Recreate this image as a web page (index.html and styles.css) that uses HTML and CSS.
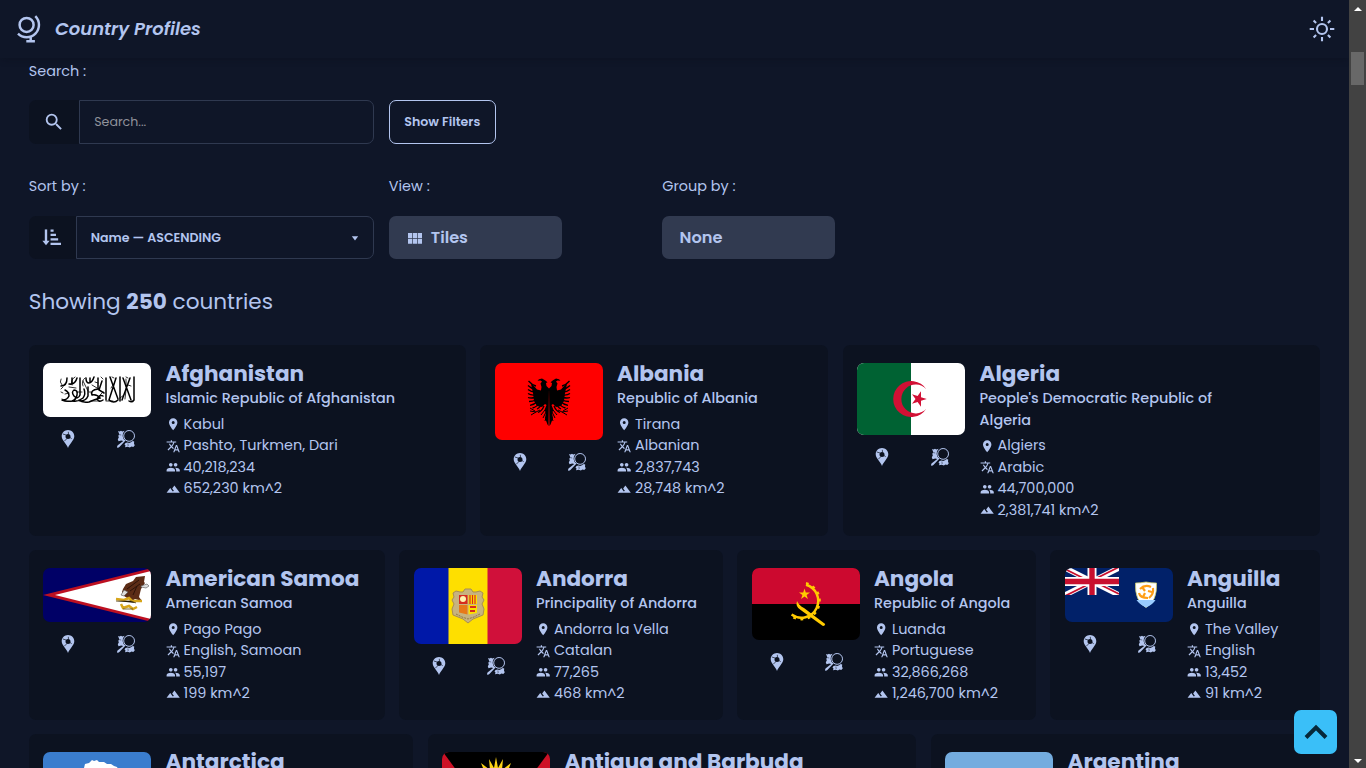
FILE: index.html
```html
<!DOCTYPE html>
<html lang="en">
<head>
<meta charset="utf-8">
<title>Country Profiles</title>
<link rel="stylesheet" href="styles.css">
</head>
<body>
<svg class="sprite" aria-hidden="true">
  <symbol id="pin" viewBox="0 0 24 24"><path fill="currentColor" d="M12 2C8.130 2 5 5.130 5 9c0 5.250 7 13 7 13s7-7.750 7-13c0-3.870-3.130-7-7-7zm0 9.500a2.500 2.500 0 1 1 0-5 2.500 2.500 0 0 1 0 5z"/></symbol>
  <symbol id="lang" viewBox="0 0 24 24"><path fill="currentColor" d="M12.870 15.070l-2.540-2.510.03-.03A17.500 17.500 0 0 0 14.070 6H17V4h-7V2H8v2H1v2h11.170C11.500 7.920 10.440 9.750 9 11.350 8.070 10.320 7.300 9.190 6.690 8h-2c.73 1.630 1.730 3.170 2.980 4.560l-5.090 5.020L4 19l5-5 3.110 3.110.76-2.040zM18.500 10h-2L12 22h2l1.120-3h4.750L21 22h2l-4.500-12zm-2.620 7l1.620-4.330L19.120 17h-3.240z"/></symbol>
  <symbol id="people" viewBox="0 0 24 24"><path fill="currentColor" d="M16 11c1.660 0 3-1.340 3-3s-1.340-3-3-3-3 1.340-3 3 1.340 3 3 3zm-8 0c1.660 0 3-1.340 3-3S9.660 5 8 5 5 6.340 5 8s1.340 3 3 3zm0 2c-2.330 0-7 1.170-7 3.500V19h14v-2.500C15 14.170 10.330 13 8 13zm8 0c-.29 0-.62.020-.97.050 1.160.84 1.970 1.970 1.970 3.450V19h6v-2.500c0-2.330-4.670-3.500-7-3.500z"/></symbol>
  <symbol id="area" viewBox="0 0 24 24"><path fill="currentColor" d="M14 6l-3.750 5 2.850 3.800-1.600 1.200C9.810 13.750 7 10 7 10l-6 8h22L14 6z"/></symbol>
  <symbol id="mappin" viewBox="0 0 18 18"><path fill="currentColor" fill-rule="evenodd" d="M9 0C5.500 0 2.700 2.800 2.700 6.300c0 2.400 1.500 4.300 3.100 6.400C7 14.300 8.300 16 9 18c.7-2 2-3.700 3.200-5.300 1.600-2.100 3.100-4 3.100-6.400C15.300 2.800 12.500 0 9 0zM9 3.900a2.500 2.500 0 1 1 0 5 2.500 2.500 0 0 1 0-5z"/><path d="M3.800 4l3.400 1M5.300 11.200l2.600-2.600M9.300 1.800l.2 2.600M11 7.500l1.700 1.200" stroke="#0c1220" stroke-width=".7" fill="none"/></symbol>
  <symbol id="mapsearch" viewBox="0 0 18 18"><circle cx="12.100" cy="5.900" r="5.400" fill="none" stroke="currentColor" stroke-width="1"/><path fill="currentColor" d="M1 1l1.500.6L4 .7l1.300.8L7.600.8 6 3.300l-.4 2.800.9 2.600 1 1.300-1.300 1-2-.4-2.700.7-.7-2 1-1.800-.5-1.700 1-1.500zM7.800 9.700l.8.9-1 1L2.400 17l-1.700 1-.7-1 .5-1.500zM8.500 13l2-.6 1.700.5 1.800-.6 1.800-1.300 1.400.5-.2 2.200.8 1.500-1.500 1.700-1.800-.3-1.700.9-2-.7-2.800.4.500-1.600-1-1z"/><path d="M2.200 4.600l2 .4M10.900 13.500l.3 2.500" stroke="#0c1220" stroke-width=".5"/></symbol>
</svg>

<div class="page">
  <header class="topbar">
    <svg class="logo" viewBox="0 0 28 30" fill="none" stroke="currentColor" stroke-width="2.500"><circle cx="10.600" cy="10.900" r="7"/><path d="M19.300 2.200A12.300 12.300 0 0 1 2 19.700M14.700 22v4.500M10.300 27.200h8.600"/></svg>
    <h1 class="brand">Country Profiles</h1>
    <svg class="sun" viewBox="0 0 26 26" fill="none" stroke="currentColor" stroke-width="2.100"><circle cx="13" cy="13" r="5"/><path d="M13 .7V5M13 21v4.300M.7 13H5M21 13h4.300M4.600 4.600l2.500 2.500M18.900 18.900l2.500 2.500M4.600 21.400l2.500-2.500M18.900 7.100l2.500-2.500"/></svg>
  </header>

  <main class="content">
    <section class="controls">
      <label class="label">Search :</label>
      <div class="search-row">
        <div class="field">
          <span class="field-icon search-icon"><svg viewBox="0 0 24 24"><path fill="currentColor" d="M15.500 14h-.79l-.28-.27A6.470 6.470 0 0 0 16 9.500 6.500 6.500 0 1 0 9.500 16c1.610 0 3.090-.59 4.230-1.570l.27.28v.79l5 4.990L20.490 19l-4.990-5zm-6 0C7.010 14 5 11.990 5 9.500S7.010 5 9.500 5 14 7.010 14 9.500 11.990 14 9.500 14z"/></svg></span>
          <div class="field-box placeholder">Search...</div>
        </div>
        <button class="outline">Show Filters</button>
      </div>
      <div class="options">
        <div class="option sort">
          <label class="label">Sort by :</label>
          <div class="field">
            <span class="field-icon sort-icon"><svg viewBox="0 0 20 20" fill="none" stroke="currentColor"><path stroke-width="2.500" d="M4.200 1.500v14"/><path fill="currentColor" stroke="none" d="M.4 13.300H8L4.200 18.200z"/><path stroke-width="2.300" d="M9 2.700h3.200M9 7.300h5.700M9 12h8M9 16.800h11"/></svg></span>
            <div class="field-box select">Name — ASCENDING<svg viewBox="0 0 8 5"><path fill="currentColor" d="M.8.3h6.400L4 4.500z"/></svg></div>
          </div>
        </div>
        <div class="option view">
          <label class="label">View :</label>
          <button class="solid tiles-btn"><svg viewBox="0 0 14 11"><path fill="currentColor" d="M0 0h4.200v5H0zM4.900 0h4.200v5H4.900zM9.800 0H14v5H9.800zM0 5.800h4.200v5H0zM4.900 5.800h4.200v5H4.900zM9.800 5.800H14v5H9.800z"/></svg>Tiles</button>
        </div>
        <div class="option group">
          <label class="label">Group by :</label>
          <button class="solid">None</button>
        </div>
      </div>
    </section>

    <p class="summary">Showing <b>250</b> countries</p>

    <section class="tiles first">
      <article class="card">
        <div class="side">
          <svg class="flag" viewBox="0 0 108 54"><path fill="#fff" d="M0 0h108v54H0z"/><g fill="none" stroke="#000" stroke-width="1.500" stroke-linecap="round"><path d="M91 14v23q-2 3-5 1M87 15l-8 22M80 15l8 22M77 14v24M73 15l-7 22q5 4 9 0M67 14l8 22M63 15v22M59 18l-3 9 5 3M60 37q-4 3-6-1 3-5 6-3M55 15v11q-8 1-6 6 5-1 8 3-7 2-11 4-7 1-10-2M51 14q-2 6-5 6-3 0-3-5M47 15v4M45 24v9q-2 5-8 5M41 26q2 5-1 9-5 4-10 3M37 15v17q-2 5-6 1-3-4 0-6 4 0 3 5-1 5-5 6-6 1-10-1M34 15q-2 7-8 6M29 15v6M22 27q4 2 4 6-2 4-6 4M24 15q0 8-6 8"/><path stroke-width=".8" d="M18 16q-2 3 1 6M20 24l-2 2M18 29l2 1M32 14q-5 3-3 8M42 15q-4 3-2 8M58 14l2 2M69 14l2 1M83 14l2 1M85 22l3 1M83 16q1 8-1 20M70 22l-2 3M52 19l3 1M46 29h3M57 32l3-3M81 32l-4 3M39 29h-5M26 30l-4 1M19 36q5 4 12 2M48 38h9M63 38h7M40 18l5 10M49 22l5 3M26 24l7 1"/></g></svg>
          <div class="actions"><svg><use href="#mappin"/></svg><svg><use href="#mapsearch"/></svg></div>
        </div>
        <div class="info">
          <h2>Afghanistan</h2><h3>Islamic Republic of Afghanistan</h3>
          <ul><li><svg><use href="#pin"/></svg>Kabul</li><li><svg><use href="#lang"/></svg>Pashto, Turkmen, Dari</li><li><svg><use href="#people"/></svg>40,218,234</li><li><svg><use href="#area"/></svg>652,230 km^2</li></ul>
        </div>
      </article>
      <article class="card">
        <div class="side">
          <svg class="flag" viewBox="0 0 108 77"><path fill="red" d="M0 0h108v77H0z"/><g id="eagle"><path d="M54 25.500l-2.500-2.500-.5-3 1.500-.8-2.500-2-3-1.700-3 .8-1.500 1.500 3-.2 1.500 1-1.500 2 1 3.400-.5 3.500-4-1-3.500-4-2.500-1.500 2 9 1 8 3 5 5 1 3-3 1.500 1-2 5 1.500 3-1 5 2.500 6.500 1 1.500z"/><path fill="none" stroke="#000" stroke-width="1.300" d="M41 23q-4-1-7.500-5M40 26q-4-.5-7-3.500M40 29q-4 0-7-2.500M40 32q-4 .5-7-1.500M40 34.500q-4 1-7 0M41 37q-3.500 1.500-7 1.500M42.500 38.500q-3 3-7.500 3.800M44.500 39.500q-2.500 4.500-7 5.500M47 39.500q-1.500 5-5 6.500M49 43q-2 5-6 6.500"/><path fill="none" stroke="#000" d="M45 47l-4 2-6-1M41 49l-5 3M40 48l-5-3M50 47l-4 5M51 49l-3 6M52 52l-2 6"/></g><use href="#eagle" transform="matrix(-1 0 0 1 108 0)"/></svg>
          <div class="actions"><svg><use href="#mappin"/></svg><svg><use href="#mapsearch"/></svg></div>
        </div>
        <div class="info">
          <h2>Albania</h2><h3>Republic of Albania</h3>
          <ul><li><svg><use href="#pin"/></svg>Tirana</li><li><svg><use href="#lang"/></svg>Albanian</li><li><svg><use href="#people"/></svg>2,837,743</li><li><svg><use href="#area"/></svg>28,748 km^2</li></ul>
        </div>
      </article>
      <article class="card">
        <div class="side">
          <svg class="flag" viewBox="0 0 108 72"><path fill="#fff" d="M0 0h108v72H0z"/><path fill="#006233" d="M0 0h54v72H0z"/><path fill="#d21034" d="M69.300 26.200a18 18 0 1 0 0 19.600 14.400 14.400 0 1 1 0-19.600zM69.800 36L64 37.800V43.800L60.600 38.900 55 40.800 58.500 36 55 31.200 60.600 33.100 64 28.200V34.200z"/></svg>
          <div class="actions"><svg><use href="#mappin"/></svg><svg><use href="#mapsearch"/></svg></div>
        </div>
        <div class="info">
          <h2>Algeria</h2><h3>People's Democratic Republic of<br>Algeria</h3>
          <ul><li><svg><use href="#pin"/></svg>Algiers</li><li><svg><use href="#lang"/></svg>Arabic</li><li><svg><use href="#people"/></svg>44,700,000</li><li><svg><use href="#area"/></svg>2,381,741 km^2</li></ul>
        </div>
      </article>
    </section>

    <section class="tiles second">
      <article class="card">
        <div class="side">
          <svg class="flag" viewBox="0 0 108 54"><path fill="#006" d="M0 0h108v54H0z"/><path fill="#bd1021" d="M0 27L105 1h3v52h-3z"/><path fill="#fff" d="M12 27l96-24v48z"/><path fill="#5c2c16" d="M80 21l3-5 7-3 3-4 9-1-1 6 1 1-4 6-2 8 3 4-7-2-3 2-8-5-2-4z"/><path d="M84 21l12-9M87 23l10-7M90 27l4-9" stroke="#2c1209" stroke-width="1"/><path fill="#ddd" stroke="#555" stroke-width=".6" d="M81 22l4 2-4 4-3-1zM98 18l6-2 2 2-3 2-5-1z"/><path fill="none" stroke="#d6a51b" stroke-width="2.500" d="M73 31l8 1 5-2 3 3h10M78 36l2 4 6-2 4 3 4-2"/><path d="M73 33h15l5 2M80 41h10" stroke="#5b410b" stroke-width=".8"/></svg>
          <div class="actions"><svg><use href="#mappin"/></svg><svg><use href="#mapsearch"/></svg></div>
        </div>
        <div class="info">
          <h2>American Samoa</h2><h3>American Samoa</h3>
          <ul><li><svg><use href="#pin"/></svg>Pago Pago</li><li><svg><use href="#lang"/></svg>English, Samoan</li><li><svg><use href="#people"/></svg>55,197</li><li><svg><use href="#area"/></svg>199 km^2</li></ul>
        </div>
      </article>
      <article class="card">
        <div class="side">
          <svg class="flag" viewBox="0 0 108 76"><path fill="#0018a8" d="M0 0h35v76H0z"/><path fill="#fedf00" d="M34.500 0H74v76H34.500z"/><path fill="#d0103a" d="M73.500 0H108v76H73.500z"/><path fill="#c7b37f" stroke="#a78d55" stroke-width="1" d="M39 25l3-2 4 1 3 0 2-3h6l2 3 3 0 4-1 3 2-1 4 2 3-2 4 2 5-1 6-5 2-5 2-5 4-5-4-5-2-5-2-1-6 2-5-2-4 2-3z"/><path fill="none" stroke="#8f7848" d="M42 46l6 3 6 2 6-2 6-3" stroke-dasharray="2 1"/><path fill="#d52b1e" d="M45 27h8.500v9H45z"/><circle cx="49" cy="31" r="3" fill="#fff2b0"/><path fill="#fedf00" d="M54.500 27H63v9h-8.500z"/><path stroke="#d52b1e" stroke-width="1.200" d="M56 27v9M58.500 27v9M61 27v9"/><path fill="#e77919" d="M45 37h8.500v9.500l-8.500-2z"/><path fill="#fedf00" d="M54.500 37H63v8l-8.500 1.500z"/><path fill="#d52b1e" d="M56 38h6v2h-6zM56 42h5v2h-5z"/></svg>
          <div class="actions"><svg><use href="#mappin"/></svg><svg><use href="#mapsearch"/></svg></div>
        </div>
        <div class="info">
          <h2>Andorra</h2><h3>Principality of Andorra</h3>
          <ul><li><svg><use href="#pin"/></svg>Andorra la Vella</li><li><svg><use href="#lang"/></svg>Catalan</li><li><svg><use href="#people"/></svg>77,265</li><li><svg><use href="#area"/></svg>468 km^2</li></ul>
        </div>
      </article>
      <article class="card">
        <div class="side">
          <svg class="flag" viewBox="0 0 108 72"><path d="M0 0h108v72H0z"/><path fill="#cc092f" d="M0 0h108v36H0z"/><g fill="none" stroke="#ffcb00"><path stroke-width="2.500" d="M54 16.800A16.800 16.800 0 1 1 39.600 46.600"/><path stroke-width="2.400" stroke-dasharray="2.800 4.400" d="M54 15.200A18.300 18.300 0 1 1 39 48"/></g><path fill="#ffcb00" d="M45 33q-2 6 4 9.300L70.500 57.800q2.300.5 2.700-1.800L52 40q-5-2.500-7-7zM52.500 20.500l1.300 4h4.200l-3.400 2.500 1.300 4-3.400-2.500-3.400 2.500 1.300-4-3.400-2.500h4.200z"/></svg>
          <div class="actions"><svg><use href="#mappin"/></svg><svg><use href="#mapsearch"/></svg></div>
        </div>
        <div class="info">
          <h2>Angola</h2><h3>Republic of Angola</h3>
          <ul><li><svg><use href="#pin"/></svg>Luanda</li><li><svg><use href="#lang"/></svg>Portuguese</li><li><svg><use href="#people"/></svg>32,866,268</li><li><svg><use href="#area"/></svg>1,246,700 km^2</li></ul>
        </div>
      </article>
      <article class="card">
        <div class="side">
          <svg class="flag" viewBox="0 0 108 54"><path fill="#012169" d="M0 0h108v54H0z"/><svg width="54" height="27" viewBox="0 0 54 27"><path stroke="#fff" stroke-width="5.400" d="M0 0l54 27M54 0L0 27"/><path stroke="#c8102e" stroke-width="1.800" d="M0 1l27 13.500M54 26L27 12.500M54-1L27 12.500M0 28l27-13.500"/><path stroke="#fff" stroke-width="9" d="M27 0v27M0 13.500h54"/><path stroke="#c8102e" stroke-width="5.400" d="M27 0v27M0 13.500h54"/></svg><path fill="#fff" stroke="#c8c86a" stroke-width=".8" d="M70.500 15q5 0 10.500-1 5 1 10.500 1 1 18-10.500 24.500Q69.500 33 70.500 15z"/><path fill="#9cf" d="M71.500 32h19q-3 5-9.500 7.500-6-2.500-9.500-7.500z"/><g fill="none" stroke="#ff9e16" stroke-width="2.200"><path d="M75 21q5-5 11-2M88 20q1 6-4 10M83 30q-8 0-9-5M77 19l3 4M87 24l-4-1M78 29l2-4"/></g></svg>
          <div class="actions"><svg><use href="#mappin"/></svg><svg><use href="#mapsearch"/></svg></div>
        </div>
        <div class="info">
          <h2>Anguilla</h2><h3>Anguilla</h3>
          <ul><li><svg><use href="#pin"/></svg>The Valley</li><li><svg><use href="#lang"/></svg>English</li><li><svg><use href="#people"/></svg>13,452</li><li><svg><use href="#area"/></svg>91 km^2</li></ul>
        </div>
      </article>
    </section>

    <section class="tiles third">
      <article class="card">
        <div class="side"><svg class="flag" viewBox="0 0 108 72"><path fill="#3a7dce" d="M0 0h108v72H0z"/><path fill="#fff" d="M41 16l1-4 4-1 3-3 2 1 3-1 2 2 5 0 3 2 4 0 3 2 3 1 4 8-3 20-20 10-20-14-5-14 9-7z"/></svg></div>
        <div class="info"><h2>Antarctica</h2></div>
      </article>
      <article class="card">
        <div class="side"><svg class="flag" viewBox="0 0 108 72"><path fill="#ce1126" d="M0 0h108v72H0z"/><path d="M1 0h106L54 72z"/><path fill="#fcd116" d="M54 5l2 11 5-9-1 11 9-7-4 10 9-3-8 8H42l-8-8 9 3-4-10 9 7-1-11 5 9z"/></svg></div>
        <div class="info"><h2>Antigua and Barbuda</h2></div>
      </article>
      <article class="card">
        <div class="side"><svg class="flag" viewBox="0 0 108 68"><path fill="#74acdf" d="M0 0h108v68H0z"/><path fill="#fff" d="M0 23h108v22H0z"/></svg></div>
        <div class="info"><h2>Argentina</h2></div>
      </article>
    </section>
  </main>
</div>

<button class="to-top" aria-label="Back to top"><svg viewBox="0 0 24 16"><path fill="none" stroke="#06283a" stroke-width="4" d="M2 13.500L12 3.500l10 10"/></svg></button>
<div class="scrollbar"><i class="arrow up"></i><i class="thumb"></i><i class="arrow down"></i></div>
</body>
</html>
```
FILE: styles.css
```css
* { box-sizing: border-box; margin: 0; padding: 0; }
html { font-size: 14.4px; height: 100%; overflow: hidden; }
body {
  height: 768px;
  overflow: hidden;
  display: flex;
  background: #0f1628;
  color: #b3c5ef;
  font-family: Poppins, Inter, "Noto Sans", sans-serif;
  line-height: 1.5;
}
svg { display: block; flex: none; }
button { font: inherit; color: inherit; }
.sprite { position: absolute; width: 0; height: 0; }
.page { width: 1349px; height: 768px; overflow: hidden; flex: none; }

.topbar {
  height: 57.6px;
  display: flex;
  align-items: center;
  padding: 0 14.500px 0 16px;
  box-shadow: 0 3px 7px -2px rgba(8, 12, 24, .35);
}
.logo { width: 28px; height: 30px; }
.brand { margin-left: 11px; font-size: 18px; font-weight: 600; font-style: italic; }
.sun { width: 26px; height: 26px; margin: -.5px 0 0 auto; }

.content { padding: 3.200px 28.800px 0; }
.label { display: block; font-size: 14.4px; line-height: 21.600px; }
.search-row { display: flex; gap: 15px; margin-top: 17.600px; height: 44px; }
.field { display: flex; width: 345px; height: 100%; }
.field-icon {
  display: flex;
  align-items: center;
  justify-content: center;
  background: #0c1220;
  border-radius: 7px 0 0 7px;
}
.search-icon { width: 50px; }
.search-icon svg { width: 22px; height: 22px; }
.sort-icon { width: 47px; padding-right: 1px; }
.sort-icon svg { width: 19px; height: 19px; }
.field-box {
  flex: 1;
  display: flex;
  align-items: center;
  padding: 0 14.400px;
  border: 1px solid #2f3950;
  border-radius: 0 7px 7px 0;
  font-size: 12.600px;
}
.placeholder { color: #8f929b; font-size: 12.600px; }
.select { justify-content: space-between; padding: 1px 14px 0; font-weight: 600; }
.select svg { width: 8px; height: 5px; }
.outline {
  width: 107px;
  border: 1px solid #b3c5ef;
  border-radius: 7px;
  background: transparent;
  font-size: 12.600px;
  font-weight: 600;
}
.options { display: flex; margin-top: 32px; }
.option .field, .option .solid { height: 43.200px; margin-top: 18.400px; }
.option.sort { width: 360px; }
.option.view { width: 273.500px; }
.solid {
  width: 173px;
  display: flex;
  align-items: center;
  gap: 9px;
  padding: 1px 17.300px 0;
  border: 0;
  border-radius: 7px;
  background: #313a50;
  font-size: 16.200px;
  font-weight: 600;
}
.tiles-btn { padding-left: 19px; }
.solid svg { width: 14px; height: 11px; }

.summary { margin-top: 27px; font-size: 21.600px; line-height: 32.400px; }

.tiles { display: grid; gap: 14.400px; margin-bottom: 14.400px; }
.first { grid-template-columns: 437px 348.200px 1fr; height: 190.200px; margin-top: 26.800px; }
.second { grid-template-columns: 356px 323.600px 298.700px 1fr; height: 169.600px; }
.second .info { padding-top: .6px; }
.third { grid-template-columns: 384.500px 488.700px 1fr; height: 170px; }
.card {
  display: flex;
  gap: 14.400px;
  padding: 14.400px;
  border-radius: 7px;
  background: #0c1220;
}
.side { width: 108px; flex: none; padding-top: 3.600px; }
.flag { width: 108px; height: auto; border-radius: 7px; overflow: hidden; }
.actions { display: grid; grid-template-columns: 50.400px 50.400px; gap: 7.200px; height: 43.200px; align-items: center; justify-items: center; }
.actions svg { width: 18px; height: 18px; }
.info h2 { margin-bottom: 1.500px; font-size: 21.600px; line-height: 27px; font-weight: 700; white-space: nowrap; }
.info h3 { font-size: 14.400px; line-height: 21.600px; font-weight: 500; white-space: nowrap; }
.info ul { list-style: none; margin-top: 3.700px; }
.info li { display: flex; align-items: center; gap: 3.600px; height: 21.600px; font-size: 14.400px; white-space: nowrap; }
.info li svg { width: 14.400px; height: 14.400px; }

.to-top {
  position: fixed;
  left: 1294px;
  top: 710px;
  width: 43px;
  height: 44px;
  display: flex;
  align-items: center;
  justify-content: center;
  border: 0;
  border-radius: 7px;
  background: #3abff8;
}
.to-top svg { width: 24px; height: 16px; }

.scrollbar {
  width: 17px;
  height: 768px;
  flex: none;
  display: flex;
  flex-direction: column;
  align-items: center;
  padding: 7px 0 5px;
  background: #424242;
}
.arrow { border: 4px solid transparent; }
.up { border-top: 0; border-bottom-color: #fff; }
.down { border-bottom: 0; border-top-color: #fff; margin-top: auto; }
.thumb { width: 13px; height: 33px; margin-top: 41px; background: #686868; }
```
